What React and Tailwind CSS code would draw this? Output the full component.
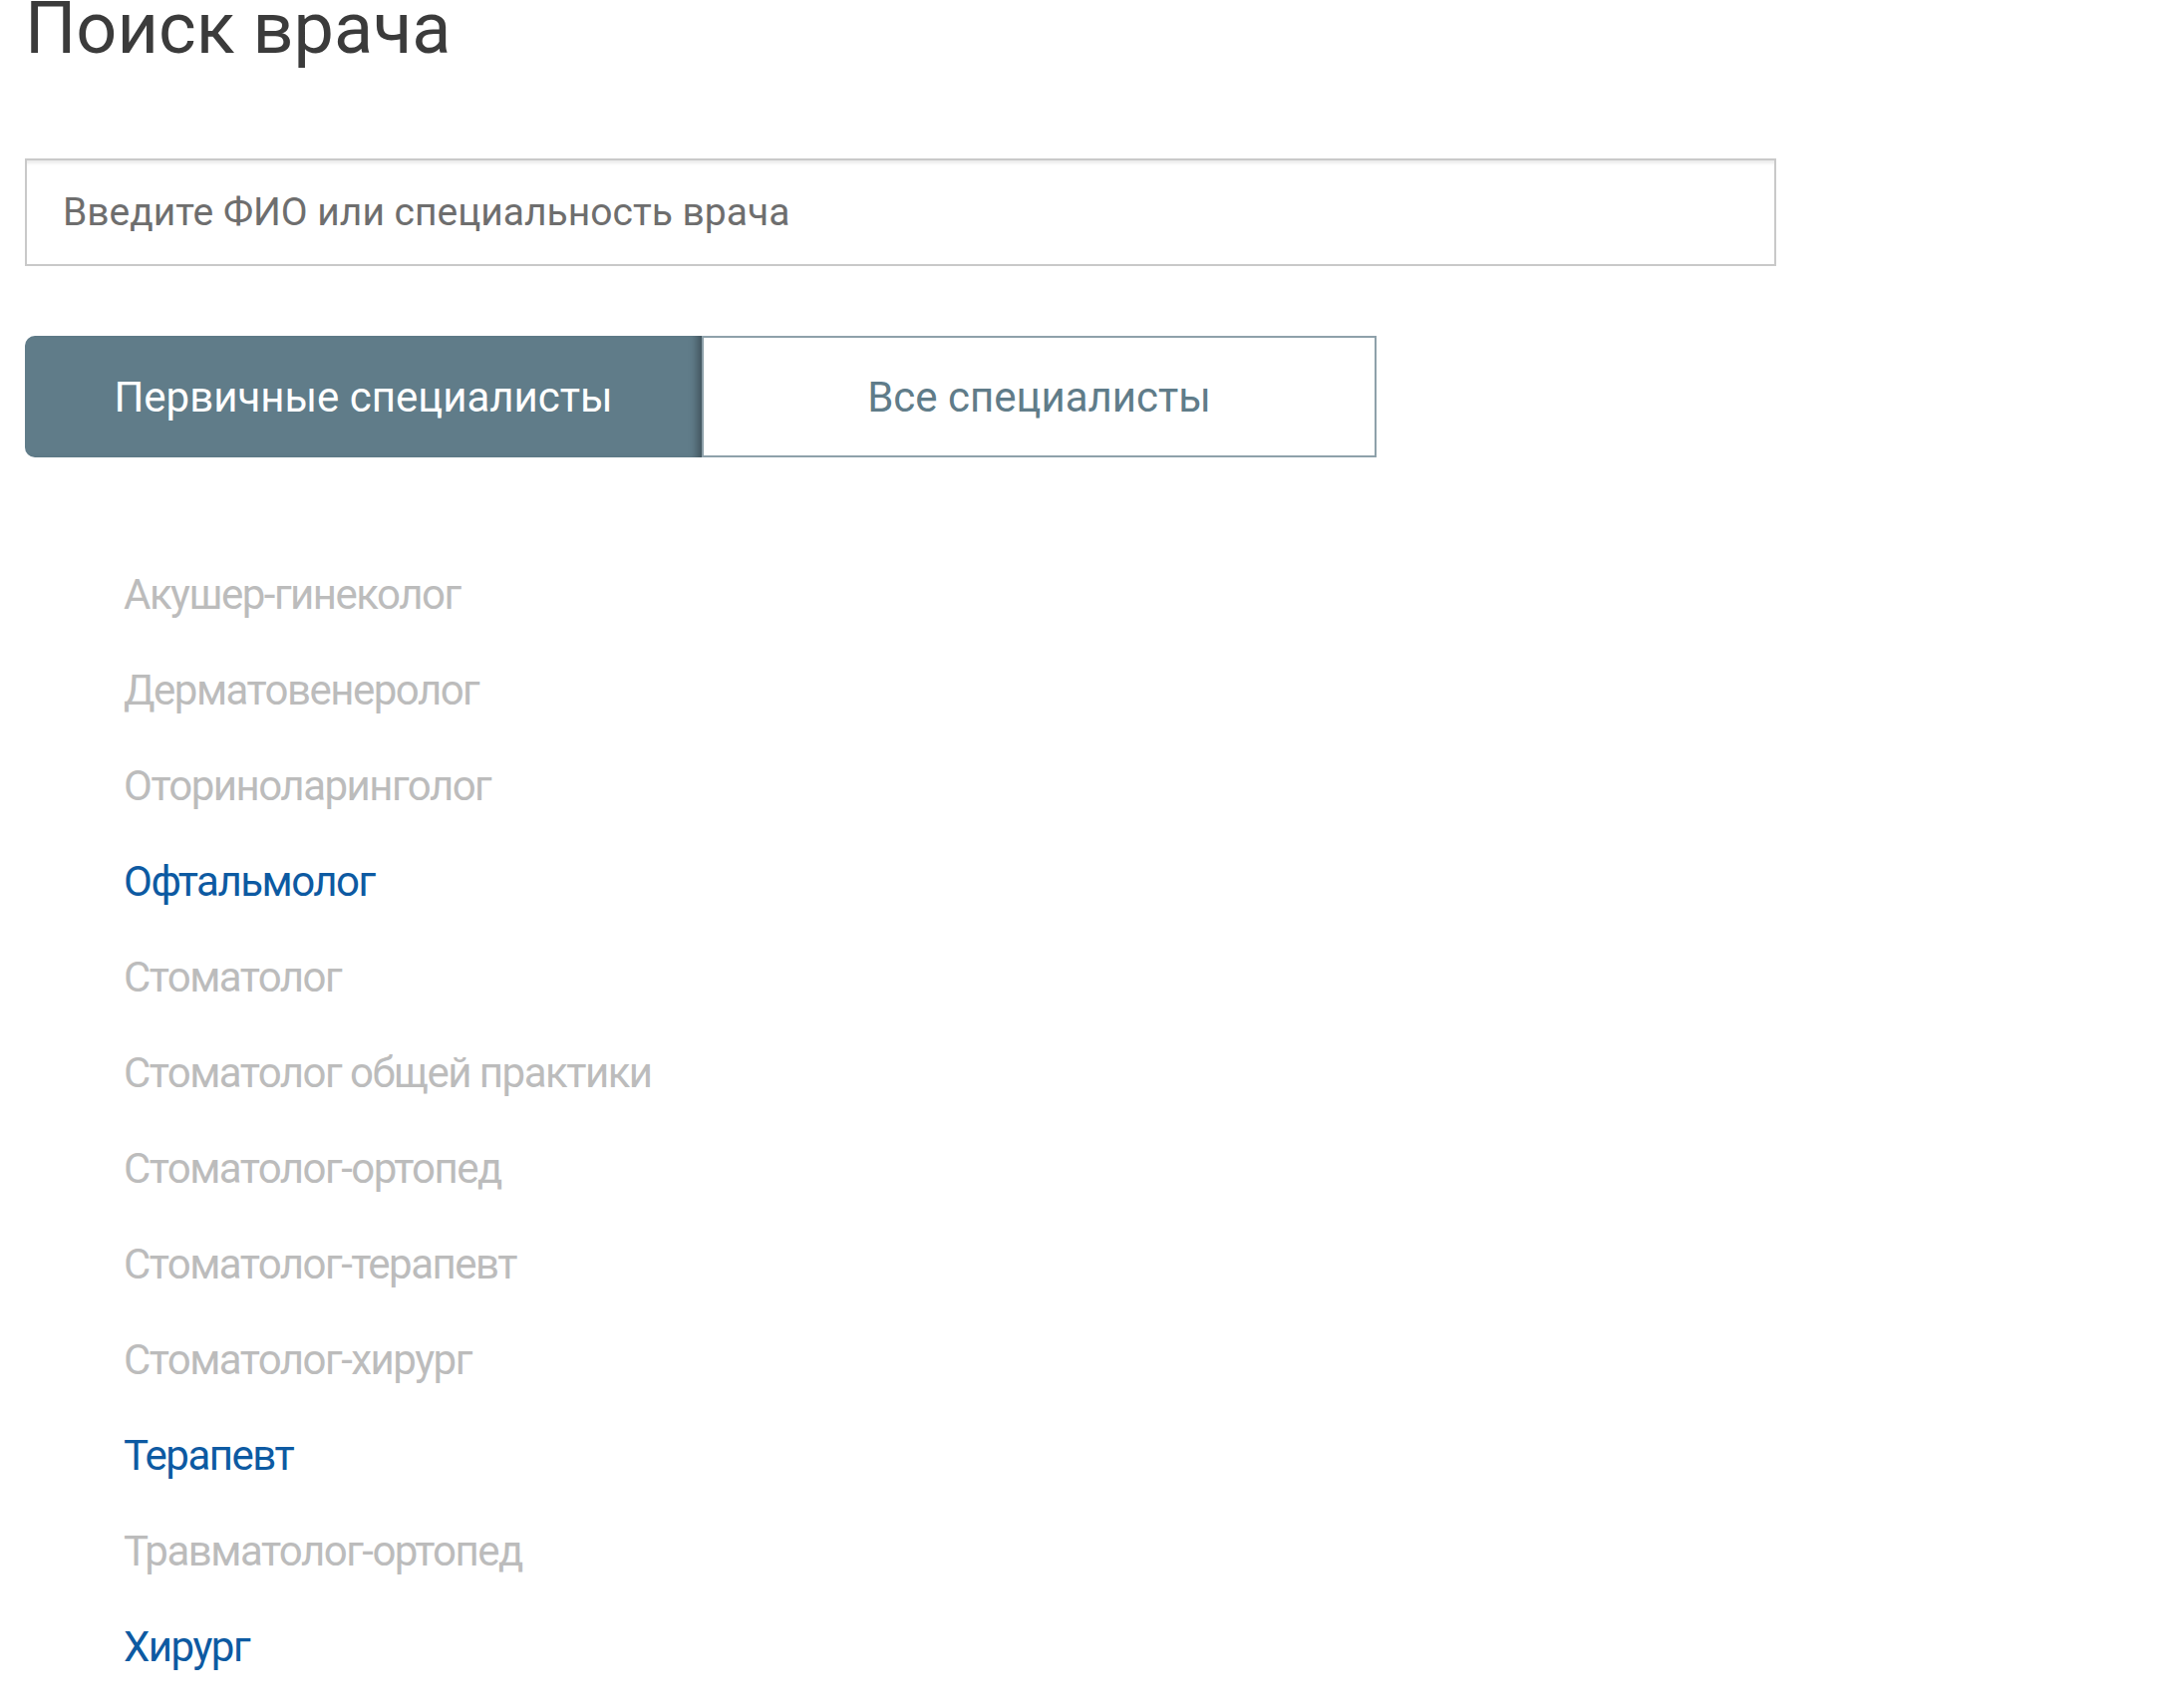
import React from "react";

const items = [
  { t: "Акушер-гинеколог", on: false },
  { t: "Дерматовенеролог", on: false },
  { t: "Оториноларинголог", on: false },
  { t: "Офтальмолог", on: true },
  { t: "Стоматолог", on: false },
  { t: "Стоматолог общей практики", on: false },
  { t: "Стоматолог-ортопед", on: false },
  { t: "Стоматолог-терапевт", on: false },
  { t: "Стоматолог-хирург", on: false },
  { t: "Терапевт", on: true },
  { t: "Травматолог-ортопед", on: false },
  { t: "Хирург", on: true },
];

export default function App() {
  return (
    <div className="min-h-screen bg-white pl-[25px] font-['Roboto',_'Liberation_Sans',_sans-serif]">
      <h1 className="text-[72px] leading-[57px] font-normal text-[#3b3b3b]">Поиск врача</h1>

      <div className="mt-[102px] w-[1757px] h-[108px] border-2 border-[#c9c9c9] bg-white shadow-[inset_0_4px_3px_-1px_rgba(0,0,0,0.08)] flex items-center pl-[36px]">
        <span className="text-[39px] text-[#6e6e6e]">Введите ФИО или специальность врача</span>
      </div>

      <div className="mt-[70px] flex w-[1356px] h-[122px]">
        <div className="w-[679px] h-full flex items-center justify-center bg-[#607c89] rounded-l-[10px] shadow-[inset_-10px_0_8px_-6px_rgba(0,0,0,0.35)] text-white text-[42px]">
          Первичные специалисты
        </div>
        <div className="flex-1 h-full flex items-center justify-center bg-white border-2 border-[#8ea1aa] text-[#607c89] text-[42px]">
          Все специалисты
        </div>
      </div>

      <ul className="mt-[90px] pl-[99px]">
        {items.map((it) => (
          <li
            key={it.t}
            className={`text-[42px] leading-[96px] tracking-[-1.5px] ${it.on ? "text-[#0d5aa2]" : "text-[#bcbcbc]"}`}
          >
            {it.t}
          </li>
        ))}
      </ul>
    </div>
  );
}
